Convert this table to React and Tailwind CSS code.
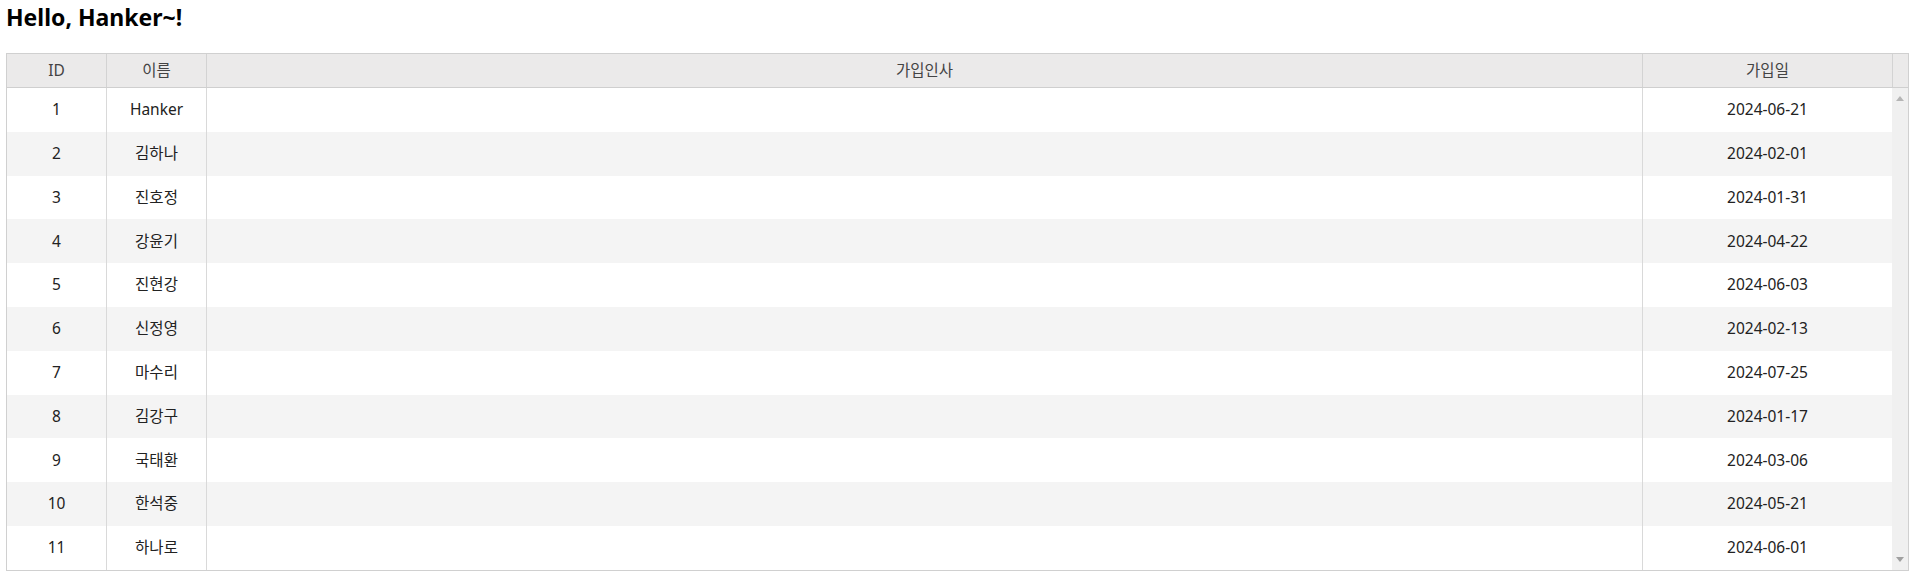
import React from "react";

const rows = [
  [1, "Hanker", "2024-06-21"],
  [2, "김하나", "2024-02-01"],
  [3, "진호정", "2024-01-31"],
  [4, "강윤기", "2024-04-22"],
  [5, "진현강", "2024-06-03"],
  [6, "신정영", "2024-02-13"],
  [7, "마수리", "2024-07-25"],
  [8, "김강구", "2024-01-17"],
  [9, "국태환", "2024-03-06"],
  [10, "한석중", "2024-05-21"],
  [11, "하나로", "2024-06-01"],
];

export default function App() {
  return (
    <div className="w-[1913px] h-[577px] bg-white overflow-hidden font-['Noto_Sans','Noto_Sans_CJK_KR',sans-serif]">
      <h1 className="pl-[6px] pt-[3px] h-[53px] text-[23px] leading-[28px] font-bold text-black">
        Hello, Hanker~!
      </h1>
      <div className="ml-[6px] w-[1903px] border border-[#d0d0d0] flex flex-col">
        <div className="flex h-[34px] bg-[#ebeaea] border-b border-[#cfcfcf] text-[15.5px] text-[#444]">
          <div className="w-[100px] flex items-center justify-center border-r border-[#d3d3d3]">ID</div>
          <div className="w-[100px] flex items-center justify-center border-r border-[#d3d3d3]">이름</div>
          <div className="flex-1 flex items-center justify-center border-r border-[#d3d3d3]">가입인사</div>
          <div className="w-[250px] flex items-center justify-center border-r border-[#d3d3d3]">가입일</div>
          <div className="w-[15px]"></div>
        </div>
        <div className="flex">
          <div className="flex-1 flex flex-col">
            {rows.map(([id, name, date], i) => (
              <div
                key={id}
                className={`flex h-[43.8px] text-[15.5px] text-[#222] ${i % 2 === 1 ? "bg-[#f4f4f4]" : "bg-white"}`}
              >
                <div className="w-[100px] flex items-center justify-center border-r border-[#d9d9d9]">{id}</div>
                <div className="w-[100px] flex items-center justify-center border-r border-[#d9d9d9]">{name}</div>
                <div className="flex-1 border-r border-[#d9d9d9]"></div>
                <div className="w-[249px] flex items-center justify-center">{date}</div>
              </div>
            ))}
          </div>
          <div className="w-[16px] bg-[#f0f0f0] flex flex-col items-center justify-between py-[8px]">
            <svg width="8" height="5" viewBox="0 0 8 5"><path d="M0 5 L4 0 L8 5 Z" fill="#b5b5b5" /></svg>
            <svg width="8" height="5" viewBox="0 0 8 5"><path d="M0 0 L8 0 L4 5 Z" fill="#a0a0a0" /></svg>
          </div>
        </div>
      </div>
    </div>
  );
}
